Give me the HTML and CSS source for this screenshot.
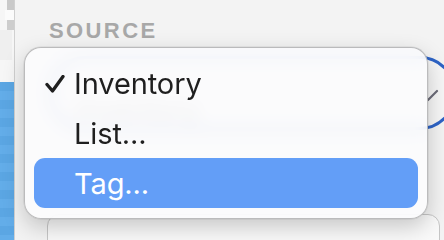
FILE: index.html
```html
<!DOCTYPE html>
<html>
<head>
<meta charset="utf-8">
<link rel="stylesheet" href="styles.css">
</head>
<body>
<div class="window">
  <div class="sidebar">
    <div class="sb-top">
      <div class="blk blk-a"></div>
      <div class="blk blk-b"></div>
      <div class="blk blk-c"></div>
      <div class="blk blk-d"></div>
    </div>
    <div class="sb-blue"></div>
  </div>
  <div class="content">
    <div class="label">SOURCE</div>
    <div class="popup">
      <span class="popup-text">Inventory</span>
      <svg class="chev" width="14" height="14" viewBox="0 0 14 14"><polyline points="-8,2 1,11 10,2" fill="none" stroke="#6c6c78" stroke-width="2.2" stroke-linecap="round" stroke-linejoin="round"/></svg>
    </div>
    <div class="field"></div>
  </div>
  <div class="menu">
    <div class="item">
      <svg class="check" width="20" height="18" viewBox="0 0 20 18"><polyline points="2,9.5 7.5,16 18,1.5" fill="none" stroke="#1f1f1f" stroke-width="3.3" stroke-linecap="round" stroke-linejoin="round"/></svg>
      <span class="item-text">Inventory</span>
    </div>
    <div class="item"><span class="item-text">List...</span></div>
    <div class="item selected"><span class="item-text">Tag...</span></div>
  </div>
</div>
</body>
</html>
```

FILE: styles.css
```css
* { box-sizing: border-box; }
html, body { margin: 0; padding: 0; }
body {
  width: 444px;
  height: 240px;
  overflow: hidden;
  background: #f3f3f3;
  font-family: "Inter", "Liberation Sans", sans-serif;
}
.window {
  position: relative;
  display: flex;
  width: 444px;
  height: 240px;
  overflow: hidden;
}
.sidebar {
  width: 15px;
  flex: none;
  display: flex;
  flex-direction: column;
  border-right: 1px solid #d0d0d0;
  background: #f6f6f6;
}
.sb-top {
  height: 82px;
  display: flex;
  flex-direction: column;
}
.blk { height: 10px; }
.blk-a { margin-left: 7px; background: #c9c9c9; }
.blk-b { margin-left: 5px; background: #fbfbfb; }
.blk-c { margin-left: 7px; background: #cdcdcd; }
.blk-d { height: 30px; margin-right: 2px; background: #efefef; }
.sb-blue {
  flex: 1;
  background: repeating-linear-gradient(180deg, #5ba6e3 0 9px, #63ade9 9px 18px);
}
.content {
  flex: 1;
  min-width: 0;
  display: flex;
  flex-direction: column;
  padding-left: 34px;
  overflow: hidden;
}
.label {
  margin-top: 21px;
  height: 20px;
  font-family: "Liberation Sans", sans-serif;
  font-weight: bold;
  font-size: 22px;
  line-height: 20px;
  letter-spacing: 2.4px;
  color: #a8a8a8;
}
.popup {
  margin-top: 15px;
  margin-right: -12px;
  height: 80px;
  border: 3px solid #2d63c6;
  border-radius: 36px;
  background: #f6f6f6;
  display: flex;
  align-items: center;
  padding-left: 24px;
  position: relative;
}
.popup-text {
  font-size: 28px;
  color: #8a8a8a;
  margin-top: 34px;
}
.chev {
  position: absolute;
  left: 375px;
  top: 30px;
}
.field {
  margin-top: 84px;
  margin-left: -2px;
  margin-right: 4px;
  height: 40px;
  flex: none;
  border: 1.5px solid #c6c6c6;
  border-radius: 12px;
  background: #f9f9f9;
}
.menu {
  position: absolute;
  left: 24px;
  top: 47px;
  width: 404px;
  height: 172px;
  padding: 10px 9px 10px 9px;
  border: 1px solid rgba(0,0,0,0.25);
  border-radius: 17px;
  background: rgba(252,252,253,0.88);
  backdrop-filter: blur(8px);
  box-shadow: 0 8px 22px rgba(0,0,0,0.2), 0 0 0 0.5px rgba(0,0,0,0.1);
  display: flex;
  flex-direction: column;
}
.item {
  height: 50px;
  flex: none;
  display: flex;
  align-items: center;
  position: relative;
  padding-left: 40px;
  border-radius: 11px;
  font-size: 29px;
  color: #1f1f1f;
}
.item-text { letter-spacing: -0.1px; }
.check {
  position: absolute;
  left: 11px;
  top: 17px;
}
.selected {
  background: #639ef7;
  color: #ffffff;
}
```
